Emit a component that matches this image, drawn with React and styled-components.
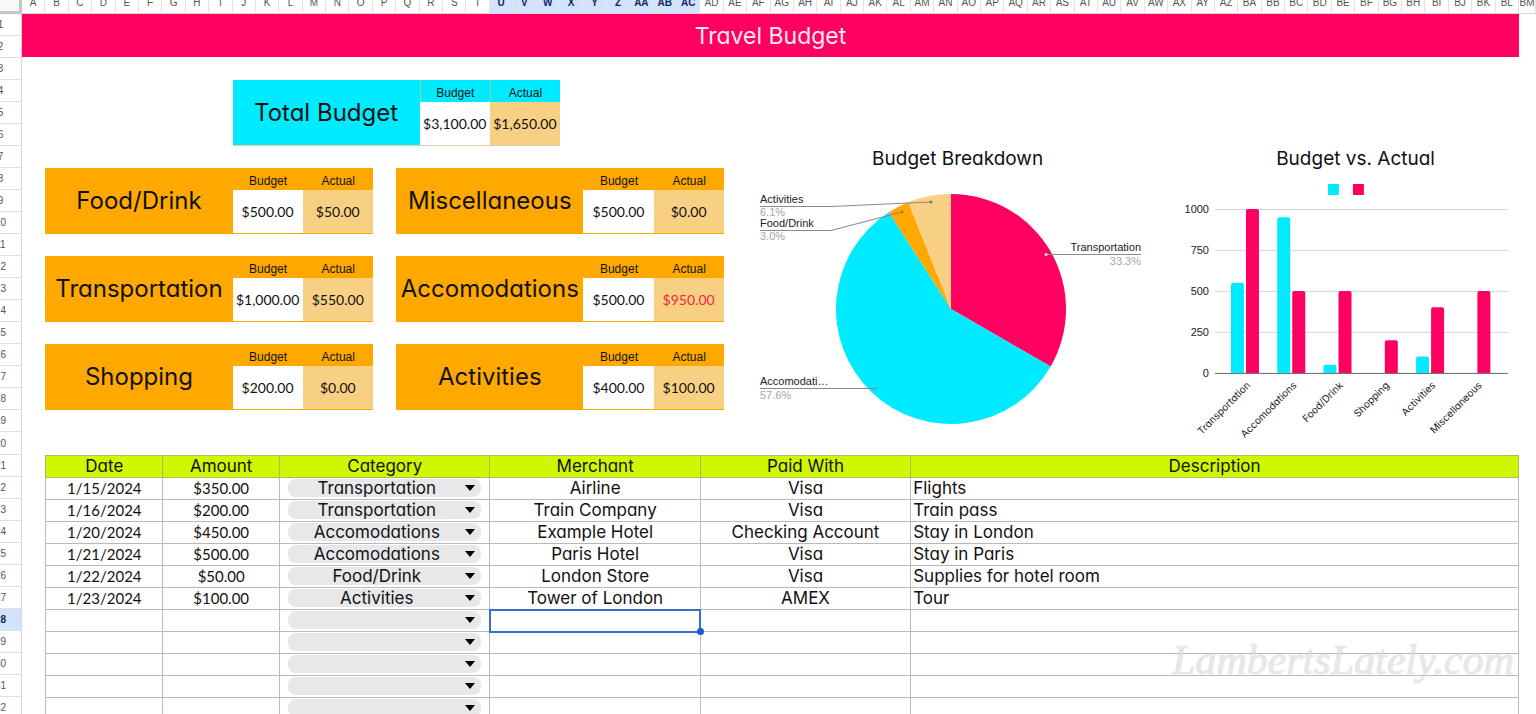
import React from "react";
import styled, { createGlobalStyle, css } from "styled-components";

const colors = {
  pink: "#ff0060",
  cyan: "#00ebff",
  orange: "#ffa900",
  tan: "#f8d084",
  lime: "#cff800",
};

const COLUMN_COUNT = 64;
const ROW_COUNT = 32;

function columnName(index) {
  const letter = String.fromCharCode(65 + (index % 26));
  if (index < 26) return letter;
  return String.fromCharCode(64 + Math.floor(index / 26)) + letter;
}

const columns = Array.from({ length: COLUMN_COUNT }, (_, i) => columnName(i));
const rows = Array.from({ length: ROW_COUNT }, (_, i) => i + 1);

const cards = [
  { name: "Total Budget", budget: "$3,100.00", actual: "$1,650.00", col: 10, row: 4, total: true },
  { name: "Food/Drink", budget: "$500.00", actual: "$50.00", col: 2, row: 8 },
  { name: "Miscellaneous", budget: "$500.00", actual: "$0.00", col: 17, row: 8 },
  { name: "Transportation", budget: "$1,000.00", actual: "$550.00", col: 2, row: 12 },
  { name: "Accomodations", budget: "$500.00", actual: "$950.00", col: 17, row: 12, over: true },
  { name: "Shopping", budget: "$200.00", actual: "$0.00", col: 2, row: 16 },
  { name: "Activities", budget: "$400.00", actual: "$100.00", col: 17, row: 16 },
];

const categories = [
  "Transportation",
  "Accomodations",
  "Food/Drink",
  "Shopping",
  "Activities",
  "Miscellaneous",
];

const expenses = [
  ["1/15/2024", "$350.00", "Transportation", "Airline", "Visa", "Flights"],
  ["1/16/2024", "$200.00", "Transportation", "Train Company", "Visa", "Train pass"],
  ["1/20/2024", "$450.00", "Accomodations", "Example Hotel", "Checking Account", "Stay in London"],
  ["1/21/2024", "$500.00", "Accomodations", "Paris Hotel", "Visa", "Stay in Paris"],
  ["1/22/2024", "$50.00", "Food/Drink", "London Store", "Visa", "Supplies for hotel room"],
  ["1/23/2024", "$100.00", "Activities", "Tower of London", "AMEX", "Tour"],
  ["", "", "", "", "", ""],
  ["", "", "", "", "", ""],
  ["", "", "", "", "", ""],
  ["", "", "", "", "", ""],
  ["", "", "", "", "", ""],
];

const chartData = [
  { name: "Transportation", actual: 550, budget: 1000 },
  { name: "Accomodations", actual: 950, budget: 500 },
  { name: "Food/Drink", actual: 50, budget: 500 },
  { name: "Shopping", actual: 0, budget: 200 },
  { name: "Activities", actual: 100, budget: 400 },
  { name: "Miscellaneous", actual: 0, budget: 500 },
];

const slices = [
  { value: 550, color: colors.pink },
  { value: 950, color: colors.cyan },
  { value: 50, color: colors.orange },
  { value: 100, color: colors.tan },
];

function slicePaths(cx, cy, r) {
  const total = slices.reduce((sum, s) => sum + s.value, 0);
  let start = 0;
  return slices.map((s) => {
    const end = start + s.value / total;
    const point = (t) =>
      `${cx + r * Math.sin(t * 2 * Math.PI)} ${cy - r * Math.cos(t * 2 * Math.PI)}`;
    const large = end - start > 0.5 ? 1 : 0;
    const d = `M${cx} ${cy}L${point(start)}A${r} ${r} 0 ${large} 1 ${point(end)}Z`;
    start = end;
    return { d, color: s.color };
  });
}

function BudgetCard({ name, budget, actual, col, row, total, over }) {
  return (
    <Card $col={col} $row={row} $total={total}>
      <CardName>{name}</CardName>
      <CardHead $total={total}>Budget</CardHead>
      <CardHead $total={total}>Actual</CardHead>
      <CardValue>{budget}</CardValue>
      <CardValue $actual $over={over}>
        {actual}
      </CardValue>
    </Card>
  );
}

function PieChart() {
  return (
    <Panel $from={32} $to={50}>
      <PanelTitle>Budget Breakdown</PanelTitle>
      <Chart viewBox="0 0 421 258" role="img" aria-label="Budget Breakdown">
        {slicePaths(204, 137, 115).map((s) => (
          <path key={s.color} d={s.d} fill={s.color} />
        ))}
        <Leader d="M13 34.5H84L184 30" />
        <circle cx="184" cy="30" r="1.5" fill="#777" />
        <Leader d="M13 58.5H84L155 40" />
        <circle cx="155" cy="40" r="1.5" fill="#b07d1c" />
        <Leader d="M13 216.5H128" />
        <circle cx="128" cy="216.5" r="1.5" fill="#5aa" />
        <Leader d="M394 82.5H299" />
        <circle cx="299" cy="82.5" r="1.5" fill="#ddd" />
        <PieLabel x="13" y="31">Activities</PieLabel>
        <PieLabel x="13" y="44" $light>6.1%</PieLabel>
        <PieLabel x="13" y="55">Food/Drink</PieLabel>
        <PieLabel x="13" y="68" $light>3.0%</PieLabel>
        <PieLabel x="13" y="213">Accomodati…</PieLabel>
        <PieLabel x="13" y="227" $light>57.6%</PieLabel>
        <PieLabel x="394" y="79" $end>Transportation</PieLabel>
        <PieLabel x="394" y="93" $end $light>33.3%</PieLabel>
      </Chart>
    </Panel>
  );
}

function BarChart() {
  const base = 201;
  const scale = 0.164;
  const barTop = (x, value) => {
    const h = value * scale;
    return `M${x} ${base}v${2 - h}q0 -2 2 -2h9q2 0 2 2v${h - 2}z`;
  };

  return (
    <Panel $from={50} $to={65}>
      <PanelTitle $inset>Budget vs. Actual</PanelTitle>
      <Chart viewBox="0 0 351 268" role="img" aria-label="Budget vs. Actual">
        <rect x="160" y="12" width="11" height="11" rx="1" fill={colors.cyan} />
        <rect x="185" y="12" width="11" height="11" rx="1" fill={colors.pink} />
        {[0, 250, 500, 750, 1000].map((tick) => (
          <g key={tick}>
            <path
              d={`M47 ${base - tick * scale + 0.5}H340`}
              stroke={tick ? "#d6d6d6" : "#666"}
            />
            <AxisLabel x="41" y={base - tick * scale + 4}>
              {tick}
            </AxisLabel>
          </g>
        ))}
        {chartData.map((item, i) => {
          const x = 63 + i * 46.3;
          return (
            <g key={item.name}>
              {item.actual > 0 && <path d={barTop(x, item.actual)} fill={colors.cyan} />}
              <path d={barTop(x + 15, item.budget)} fill={colors.pink} />
              <CategoryLabel transform={`translate(${x + 20} 214) rotate(-45)`}>
                {item.name}
              </CategoryLabel>
            </g>
          );
        })}
      </Chart>
    </Panel>
  );
}

function CategorySelect({ value, row }) {
  return (
    <Pill>
      <Select defaultValue={value} aria-label={`Category, row ${row}`}>
        <option value="" />
        {categories.map((c) => (
          <option key={c}>{c}</option>
        ))}
      </Select>
      <Caret viewBox="0 0 10 6" aria-hidden="true">
        <path d="M0 0H10L5 6Z" />
      </Caret>
    </Pill>
  );
}

function ExpenseTable() {
  return (
    <Table>
      <colgroup>
        <Col $span={5} />
        <Col $span={5} />
        <Col $span={9} />
        <Col $span={9} />
        <Col $span={9} />
        <Col $span={26} />
      </colgroup>
      <thead>
        <tr>
          <th>Date</th>
          <th>Amount</th>
          <th>Category</th>
          <th>Merchant</th>
          <th>Paid With</th>
          <th>Description</th>
        </tr>
      </thead>
      <tbody>
        {expenses.map(([date, amount, category, merchant, paidWith, description], i) => (
          <tr key={i}>
            <Cell $number>{date}</Cell>
            <Cell $number>{amount}</Cell>
            <Cell>
              <CategorySelect value={category} row={i + 22} />
            </Cell>
            <Cell $selected={i === 6}>{merchant}</Cell>
            <Cell>{paidWith}</Cell>
            <Cell $left>{description}</Cell>
          </tr>
        ))}
      </tbody>
    </Table>
  );
}

function App() {
  return (
    <Page>
      <GlobalStyle />
      <Corner />
      <ColumnHeads>
        {columns.map((name, i) => (
          <ColumnHead key={name} $active={i >= 20 && i <= 28}>
            {name}
          </ColumnHead>
        ))}
      </ColumnHeads>
      <ColumnHead>BM</ColumnHead>
      <RowHeads>
        {rows.map((n) => (
          <RowHead key={n} $active={n === 28}>
            {n}
          </RowHead>
        ))}
      </RowHeads>
      <Sheet>
        <Title>Travel Budget</Title>
        {cards.map((card) => (
          <BudgetCard key={card.name} {...card} />
        ))}
        <PieChart />
        <BarChart />
        <ExpenseTable />
      </Sheet>
      <Watermark>LambertsLately.com</Watermark>
    </Page>
  );
}

const GlobalStyle = createGlobalStyle`
  * {
    box-sizing: border-box;
  }

  body {
    margin: 0;
    background: #fff;
    color: #111;
  }
`;

const rounded = css`
  font-family: Inter, "Open Sans", sans-serif;
  font-feature-settings: "cv11";
`;

const plain = css`
  font-family: "Liberation Sans", Arial, sans-serif;
`;

const gridRows = css`
  grid-template-rows: repeat(19, 22px) 23px;
  grid-auto-rows: 22px;
`;

const Page = styled.main`
  position: relative;
  display: grid;
  grid-template-columns: 22px 1fr 17px;
  grid-template-rows: 14px auto;
  height: 100vh;
  overflow: hidden;
`;

const Corner = styled.div`
  background: #f8f9fa;
  border-right: 3px solid #c4c6c8;
  border-bottom: 3px solid #c4c6c8;
`;

const ColumnHeads = styled.div`
  display: grid;
  grid-template-columns: repeat(${COLUMN_COUNT}, minmax(0, 1fr));
`;

/* the strip is scrolled up, only the lower part of each letter shows */
const ColumnHead = styled.div`
  ${plain}
  height: 22px;
  margin-top: -8px;
  display: flex;
  align-items: center;
  justify-content: center;
  font-size: 10px;
  font-weight: ${(p) => (p.$active ? 700 : 400)};
  color: ${(p) => (p.$active ? "#0b2a5c" : "#555")};
  background: ${(p) => (p.$active ? "#d3e3fd" : "#fff")};
  border-right: 1px solid #e2e4e6;
  border-bottom: 1px solid #d5d7d9;
`;

const RowHeads = styled.div`
  ${gridRows}
  display: grid;
  width: 42px;
  margin-left: -20px;
`;

const RowHead = styled.div`
  ${plain}
  display: flex;
  align-items: center;
  justify-content: center;
  font-size: 10px;
  font-weight: ${(p) => (p.$active ? 700 : 400)};
  color: ${(p) => (p.$active ? "#0b2a5c" : "#555")};
  background: ${(p) => (p.$active ? "#d3e3fd" : "#fff")};
  border-right: 1px solid #d5d7d9;
  border-bottom: 1px solid #dddfe1;
`;

const Sheet = styled.div`
  ${gridRows}
  display: grid;
  grid-template-columns: repeat(${COLUMN_COUNT}, minmax(0, 1fr));
`;

const Title = styled.h1`
  ${rounded}
  grid-column: 1 / -1;
  grid-row: 1 / span 2;
  display: flex;
  align-items: center;
  justify-content: center;
  margin: 0 0 1px;
  font-size: 23px;
  font-weight: 400;
  color: #ffe9f1;
  background: ${colors.pink};
`;

const Card = styled.section`
  grid-column: ${(p) => p.$col} / span 14;
  grid-row: ${(p) => p.$row} / span 3;
  display: grid;
  grid-template-columns: 8fr 3fr 3fr;
  grid-template-rows: 1fr 2fr;
  background: ${(p) => (p.$total ? colors.cyan : colors.orange)};
  border-bottom: 1px solid ${(p) => (p.$total ? "#e3cfa4" : colors.orange)};
`;

const CardName = styled.h2`
  ${rounded}
  grid-row: 1 / span 2;
  display: flex;
  align-items: center;
  justify-content: center;
  margin: 0;
  font-size: 24px;
  font-weight: 400;
`;

const CardHead = styled.div`
  ${plain}
  display: flex;
  align-items: end;
  justify-content: center;
  font-size: 12px;
  line-height: 18px;
  border-left: 1px solid ${(p) => (p.$total ? "#7fd8b0" : "transparent")};
`;

const CardValue = styled.div`
  display: flex;
  align-items: center;
  justify-content: center;
  font-family: Lato, sans-serif;
  font-size: 14px;
  color: ${(p) => (p.$over ? "#f0283c" : "#111")};
  background: ${(p) => (p.$actual ? colors.tan : "#fff")};
`;

const Panel = styled.figure`
  grid-column: ${(p) => p.$from} / ${(p) => p.$to};
  grid-row: 7 / span 14;
  margin: 0;
`;

const PanelTitle = styled.h2`
  ${rounded}
  margin: 0;
  padding-left: ${(p) => (p.$inset ? "24px" : 0)};
  font-size: 19px;
  font-weight: 400;
  line-height: 26px;
  text-align: center;
`;

const Chart = styled.svg`
  display: block;
  width: 100%;
`;

const Leader = styled.path`
  fill: none;
  stroke: #8a8a8a;
`;

const PieLabel = styled.text`
  ${plain}
  font-size: 11px;
  fill: ${(p) => (p.$light ? "#a6a6a6" : "#222")};
  text-anchor: ${(p) => (p.$end ? "end" : "start")};
`;

const AxisLabel = styled.text`
  ${plain}
  font-size: 11px;
  fill: #222;
  text-anchor: end;
`;

const CategoryLabel = styled.text`
  ${rounded}
  font-size: 10px;
  fill: #222;
  text-anchor: end;
`;

const Table = styled.table`
  ${rounded}
  grid-column: 2 / -1;
  grid-row: 21 / span 12;
  width: 100%;
  table-layout: fixed;
  border-collapse: collapse;
  font-size: 17px;
  line-height: 18px;

  tr {
    height: 22px;
  }

  th {
    padding: 0 0 2px;
    font-weight: 400;
    background: ${colors.lime};
    border: 1px solid #a9b86a;
  }
`;

const Col = styled.col`
  width: ${(p) => (p.$span / 63) * 100}%;
`;

const Cell = styled.td`
  position: relative;
  padding: 0 2px 2px;
  border: 1px solid #b9b9b9;
  text-align: ${(p) => (p.$left ? "left" : "center")};
  white-space: nowrap;

  ${(p) =>
    p.$number &&
    css`
      font-family: Lato, sans-serif;
      font-size: 15px;
    `}

  ${(p) =>
    p.$selected &&
    css`
      outline: 2px solid #3b6fce;
      outline-offset: -1px;

      &::after {
        content: "";
        position: absolute;
        right: -4px;
        bottom: -4px;
        width: 7px;
        height: 7px;
        border-radius: 50%;
        background: #1a5bd0;
      }
    `}
`;

const Pill = styled.div`
  display: flex;
  align-items: center;
  height: 18px;
  margin: 0 6px;
  padding-right: 6px;
  border-radius: 8px;
  background: #e8e8eb;
`;

const Select = styled.select`
  flex: 1;
  min-width: 0;
  height: 18px;
  padding: 0;
  border: 0;
  appearance: none;
  background: transparent;
  color: inherit;
  font: inherit;
  font-feature-settings: inherit;
  line-height: 18px;
  text-align: center;
  text-align-last: center;
`;

const Caret = styled.svg`
  width: 10px;
  height: 6px;
`;

const Watermark = styled.div`
  position: absolute;
  right: 22px;
  bottom: 24px;
  font-family: "Liberation Serif", serif;
  font-size: 42px;
  font-style: italic;
  line-height: 60px;
  color: rgba(255, 255, 255, 0.7);
  text-shadow: 0 0 1px rgba(0, 0, 0, 0.3);
  pointer-events: none;
`;

export default App;
